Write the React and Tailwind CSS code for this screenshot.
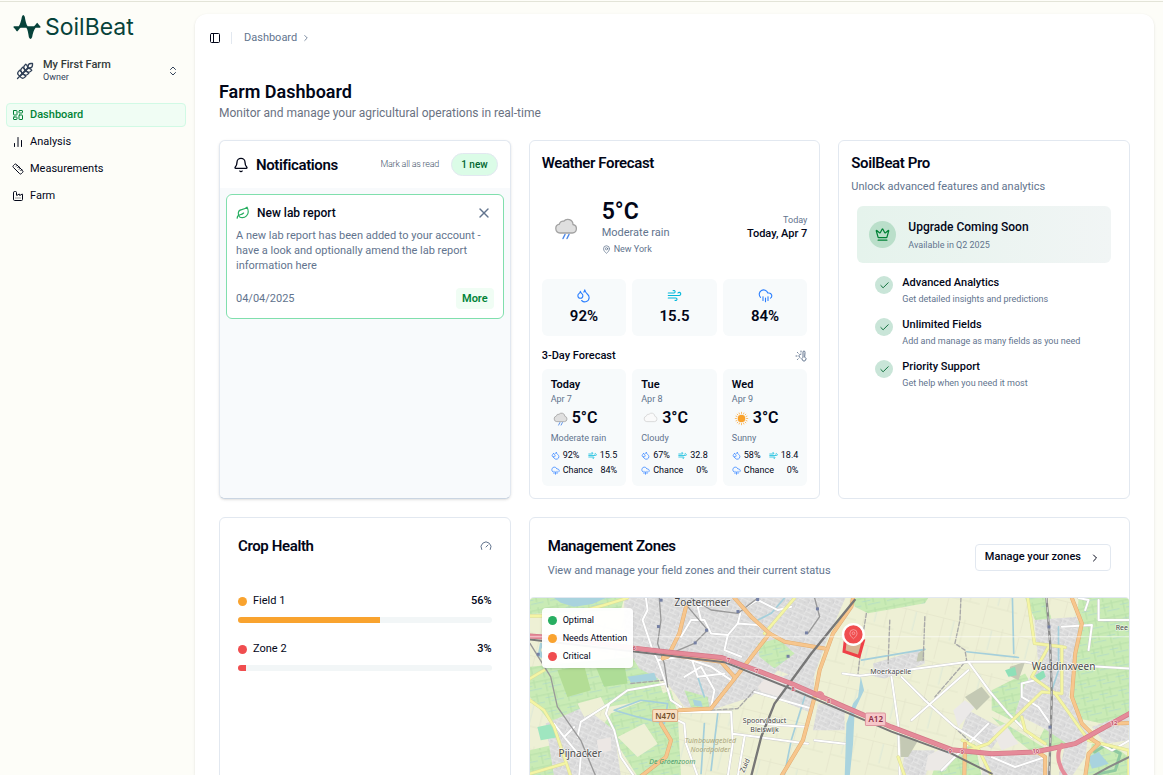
import React from 'react';
import clsx from 'clsx';
import {
  Bell,
  ChartNoAxesColumn,
  Check,
  ChevronRight,
  ChevronsUpDown,
  CloudRain,
  Crown,
  Droplets,
  Factory,
  Gauge,
  LayoutDashboard,
  Leaf,
  MapPin,
  PanelLeft,
  Ruler,
  ThermometerSun,
  Wheat,
  Wind,
  X,
} from 'lucide-react';

const NAV = [
  { label: 'Dashboard', icon: LayoutDashboard, active: true },
  { label: 'Analysis', icon: ChartNoAxesColumn },
  { label: 'Measurements', icon: Ruler },
  { label: 'Farm', icon: Factory },
];

const STATS = [
  { label: 'Humidity', icon: Droplets, value: '92%', color: 'text-blue-500' },
  { label: 'Wind', icon: Wind, value: '15.5', color: 'text-cyan-500' },
  { label: 'Chance of rain', icon: CloudRain, value: '84%', color: 'text-blue-500' },
];

const FORECAST = [
  { day: 'Today', date: 'Apr 7', sky: 'rain', temp: '5°C', text: 'Moderate rain', humidity: '92%', wind: '15.5', chance: '84%' },
  { day: 'Tue', date: 'Apr 8', sky: 'cloud', temp: '3°C', text: 'Cloudy', humidity: '67%', wind: '32.8', chance: '0%' },
  { day: 'Wed', date: 'Apr 9', sky: 'sun', temp: '3°C', text: 'Sunny', humidity: '58%', wind: '18.4', chance: '0%' },
];

const PERKS = [
  { title: 'Advanced Analytics', text: 'Get detailed insights and predictions' },
  { title: 'Unlimited Fields', text: 'Add and manage as many fields as you need' },
  { title: 'Priority Support', text: 'Get help when you need it most' },
];

const HEALTH = [
  { name: 'Field 1', value: 56, color: 'bg-[#f9a32f]' },
  { name: 'Zone 2', value: 3, color: 'bg-[#f04d4f]' },
];

const LEGEND = [
  { label: 'Optimal', color: 'bg-[#27ae60]' },
  { label: 'Needs Attention', color: 'bg-[#f9a32f]' },
  { label: 'Critical', color: 'bg-[#f04d4f]' },
];

/* ── Shared bits ── */
const Card = ({ className = '', children }) => (
  <section className={clsx('rounded-md border border-slate-200 bg-white', className)}>{children}</section>
);

const CardTitle = ({ children }) => (
  <h2 className="text-[15px] leading-5 font-semibold tracking-tight">{children}</h2>
);

const Logo = () => (
  <a href="#" className="flex items-center gap-1 px-[13px] text-[#06423a]">
    <svg viewBox="36 40 88 78" className="h-[26px] w-7" fill="currentColor" aria-hidden="true">
      <path d="M38 77L54 77C58 72 62 58 64 47Q68 36 73 47C75 60 78 72 82 77L102 77C106 74 109 69 112 66C115 69 118 75 122 77L122 81L107 81C102 86 98 100 96 111Q91 122 86 111C84 98 82 86 78 81L60 81C56 84 52 90 49 93C45 90 43 83 38 81Z" />
    </svg>
    <span className="font-[Inter] text-[23px] leading-7">SoilBeat</span>
  </a>
);

/* ── Weather glyphs ── */
const SkyIcon = ({ sky, className }) => {
  if (sky === 'sun') {
    return (
      <svg viewBox="0 0 24 24" className={className} aria-hidden="true">
        <circle cx="12" cy="12" r="6" fill="#f8a12b" />
        <g stroke="#f9bd6b" strokeWidth="1.6" strokeLinecap="round">
          <path d="M12 2v2M12 20v2M2 12h2M20 12h2M5 5l1.4 1.4M17.6 17.6 19 19M5 19l1.4-1.4M17.6 6.400 19 5" />
          <path d="M8.200 3.200l.6 1.600M15.200 19.200l.6 1.600M3.200 15.800l1.600-.6M19.200 8.800l1.600-.6M15.800 3.200l-.6 1.600M8.800 19.200l-.6 1.600M3.200 8.200l1.600.6M19.200 15.200l1.600.6" />
        </g>
      </svg>
    );
  }
  const cloudy = sky === 'cloud';
  return (
    <svg viewBox="0 0 24 24" className={className} aria-hidden="true">
      <path
        d="M6 17a4.500 4.500 0 0 1-.6-8.900 3.600 3.600 0 0 1 4.300-2.900 5.300 5.300 0 0 1 9.300 3.300 4.300 4.300 0 0 1-.7 8.500Z"
        fill={cloudy ? '#fafafa' : '#dfdfdf'}
        stroke={cloudy ? '#d4d4d4' : '#a3a3a3'}
        strokeWidth="1.300"
      />
      {!cloudy && <path d="m11 18.500-2 4M15 18.500l-2 4" stroke="#4a86e8" strokeWidth="1.400" strokeLinecap="round" />}
    </svg>
  );
};

/* ── Sidebar ── */
const Sidebar = () => (
  <aside className="flex w-[194px] shrink-0 flex-col pt-[11px]">
    <Logo />
    <button type="button" className="mt-[17px] flex items-center pr-[15px] pl-4 text-left">
      <Wheat className="size-[18px] text-slate-700" strokeWidth={1.75} />
      <span className="ml-[9px] flex-1">
        <span className="block text-[11px] leading-[14px] font-medium text-[#333b3b]">My First Farm</span>
        <span className="block text-[9px] leading-[11px] text-slate-700">Owner</span>
      </span>
      <ChevronsUpDown className="size-3 text-slate-700" />
    </button>
    <nav className="mt-5 flex flex-col gap-[3px] pr-2 pl-[6px]">
      {NAV.map(({ label, icon: Icon, active }) => (
        <a
          key={label}
          href="#"
          aria-current={active ? 'page' : undefined}
          className={clsx(
            'flex h-6 items-center gap-[6px] rounded border px-[5px] text-[11px] leading-[18px]',
            active ? 'border-[#d1fae5] bg-green-50 font-medium text-green-700' : 'border-transparent text-slate-950'
          )}
        >
          <Icon className="size-3" />
          {label}
        </a>
      ))}
    </nav>
  </aside>
);

/* ── Notifications ── */
const Notifications = () => (
  <Card className="flex flex-col overflow-hidden border-b-slate-300 shadow-sm">
    <header className="flex h-[47px] items-center pr-3 pl-[13px]">
      <Bell className="size-4" />
      <h2 className="ml-[7px] flex-1 text-[15px] leading-5 font-semibold tracking-tight">Notifications</h2>
      <button type="button" className="text-[9px] font-light tracking-tight text-slate-600">Mark all as read</button>
      <span className="ml-3 rounded-full border border-slate-200 bg-green-100 px-[9px] text-[10px] leading-[21px] font-medium text-green-800">
        1 new
      </span>
    </header>
    <div className="flex-1 bg-slate-50 p-[6px]">
      <article className="rounded-md border border-[#80dfad] bg-white p-[9px]">
        <div className="flex items-center">
          <Leaf className="size-[14px] text-[#27ae60]" />
          <h3 className="ml-[7px] flex-1 text-xs leading-[18px] font-medium">New lab report</h3>
          <button type="button" aria-label="Dismiss" className="mr-[2px]">
            <X className="size-4 text-slate-500" />
          </button>
        </div>
        <p className="mt-[6px] text-[11px] leading-[15px] text-slate-500">
          A new lab report has been added to your account - have a look and optionally amend the lab report information here
        </p>
        <div className="mt-[15px] flex items-center justify-between">
          <time className="text-[11px] leading-[18px] text-slate-500">04/04/2025</time>
          <button type="button" className="rounded bg-green-50 px-[6px] text-[11px] leading-[21px] font-semibold text-green-700">
            More
          </button>
        </div>
      </article>
    </div>
  </Card>
);

/* ── Weather ── */
const ForecastTile = ({ item }) => (
  <div className="flex flex-1 flex-col rounded-md bg-[#f7fafb] px-[9px] py-2">
    <h4 className="text-[11px] leading-4 font-semibold">{item.day}</h4>
    <p className="text-[9px] leading-3 text-slate-500">{item.date}</p>
    <div className="mt-1 flex items-center gap-1">
      <SkyIcon sky={item.sky} className="ml-[2px] size-[15px]" />
      <span className="text-[16px] leading-[18px] font-semibold">{item.temp}</span>
    </div>
    <p className="mt-1 text-[9px] leading-[14px] text-slate-500">{item.text}</p>
    <div className="mt-[3px] flex items-center justify-between text-[9px] leading-[15px]">
      <span className="flex items-center gap-[3px]">
        <Droplets className="size-[9px] text-blue-500" />
        {item.humidity}
      </span>
      <span className="flex items-center gap-[3px]">
        <Wind className="size-[9px] text-cyan-500" />
        {item.wind}
      </span>
    </div>
    <div className="flex items-center justify-between text-[9px] leading-[15px]">
      <span className="flex items-center gap-[3px]">
        <CloudRain className="size-[9px] text-blue-500" />
        Chance
      </span>
      {item.chance}
    </div>
  </div>
);

const Weather = () => (
  <Card className="p-3">
    <CardTitle>Weather Forecast</CardTitle>
    <div className="mt-[27px] flex items-center">
      <SkyIcon sky="rain" className="mx-3 size-6" />
      <div className="ml-3 flex-1">
        <p className="text-[23px] leading-6 font-semibold">5°C</p>
        <p className="text-[11px] leading-[18px] text-slate-500">Moderate rain</p>
        <p className="flex items-center gap-[3px] text-[9px] leading-[14px] text-slate-500">
          <MapPin className="size-[9px]" />
          New York
        </p>
      </div>
      <div className="text-right">
        <p className="text-[9px] leading-3 text-slate-500">Today</p>
        <p className="text-[11px] leading-4 font-medium">Today, Apr 7</p>
      </div>
    </div>
    <div className="mt-[23px] flex gap-[6px]">
      {STATS.map(({ label, icon: Icon, value, color }) => (
        <div key={label} className="flex h-[57px] flex-1 flex-col items-center rounded-md bg-[#f7fafb] pt-[9px]">
          <Icon className={clsx('size-[15px]', color)} strokeWidth={1.75} aria-label={label} />
          <span className="mt-1 text-[15px] leading-[18px] font-semibold">{value}</span>
        </div>
      ))}
    </div>
    <div className="mt-3 flex h-4 items-center justify-between">
      <h3 className="text-[11px] font-medium">3-Day Forecast</h3>
      <ThermometerSun className="size-3 text-slate-500" />
    </div>
    <div className="mt-[5px] flex gap-[6px]">
      {FORECAST.map(item => (
        <ForecastTile key={item.day} item={item} />
      ))}
    </div>
  </Card>
);

/* ── Pro upsell ── */
const ProCard = () => (
  <Card className="p-3">
    <CardTitle>SoilBeat Pro</CardTitle>
    <p className="mt-[5px] text-[11px] leading-[18px] text-slate-500">Unlock advanced features and analytics</p>
    <div className="mx-[6px] mt-[10px] flex h-[57px] items-center gap-3 rounded-md bg-linear-to-r from-[#e5f3ec] to-[#f1f5f5] px-3">
      <span className="flex size-[27px] items-center justify-center rounded-full bg-[#badfca]">
        <Crown className="size-[15px] text-green-700" />
      </span>
      <div className="pt-[2px]">
        <h3 className="text-xs leading-[18px] font-medium">Upgrade Coming Soon</h3>
        <p className="text-[9px] leading-[18px] text-slate-500">Available in Q2 2025</p>
      </div>
    </div>
    <ul className="mt-[11px] flex flex-col gap-[9px] px-6">
      {PERKS.map(perk => (
        <li key={perk.title} className="flex gap-[9px]">
          <span className="mt-[2px] flex size-[18px] items-center justify-center rounded-full bg-[#c9e5d8]">
            <Check className="size-[11px] text-green-800" />
          </span>
          <div>
            <h4 className="text-[11px] leading-[17px] font-medium">{perk.title}</h4>
            <p className="text-[9px] leading-4 text-slate-500">{perk.text}</p>
          </div>
        </li>
      ))}
    </ul>
  </Card>
);

/* ── Crop health ── */
const CropHealth = () => (
  <Card className="p-[18px]">
    <div className="flex items-center justify-between">
      <CardTitle>Crop Health</CardTitle>
      <Gauge className="size-3 text-slate-500" />
    </div>
    <div className="mt-9 flex flex-col gap-[17px]">
      {HEALTH.map(row => (
        <div key={row.name}>
          <div className="flex items-center text-[11px] leading-[18px]">
            <span className={clsx('size-[9px] rounded-full', row.color)} />
            <span className="ml-[6px] flex-1">{row.name}</span>
            <span className="font-medium">{row.value}%</span>
          </div>
          <div
            role="progressbar"
            aria-label={row.name}
            aria-valuenow={row.value}
            className="mt-[7px] h-[6px] overflow-hidden rounded-full bg-[#f2f6f7]"
          >
            <div className={clsx('h-full', row.color)} style={{ width: `${row.value}%` }} />
          </div>
        </div>
      ))}
    </div>
  </Card>
);

/* ── Map: terrain, roads and labels ── */
const URBAN = [
  'M300 264H962L905 395 860 520 760 480 680 560 560 600 480 590 430 520 345 475 300 400Z',
  'M690 540 860 520 860 590 700 550Z',
  'M770 500 870 470 865 610 790 580Z',
  'M880 580 960 590 960 660 865 660Z',
  'M65 640 180 590 270 660 290 798H90Z',
  'M1045 460 1195 415 1200 460 1080 505 1050 500Z',
  'M1528 330 1660 320 1660 400 1630 560 1700 690 1640 710 1550 650 1470 610 1500 520 1540 470Z',
  'M1330 600 1440 660 1400 715 1310 660Z',
  'M1380 735 1550 735 1580 798H1370Z',
  'M1620 700 1690 670 1680 740 1640 798 1600 798Z',
  'M1700 650 1810 610 1810 690 1740 700Z',
  'M1140 720 1230 720 1200 798H1130Z',
];

const GREENS = [
  'M18 264H300L290 300 18 312Z',
  'M18 470 330 440 400 500 420 560 250 590 160 640 90 650 18 560Z',
  'M18 720 100 700 110 798H18Z',
  'M700 400 760 385 810 430 750 475 705 440Z',
  'M260 610 440 540 460 610 470 798H340L240 640Z',
  'M985 264H1210L1200 280 1030 310 990 290Z',
  'M1660 264H1812V620L1730 640 1640 620 1650 420Z',
  'M1500 264H1560L1580 330 1530 330Z',
  'M1400 540 1500 490 1540 560 1480 640 1400 600Z',
  'M1400 620 1440 640 1570 720 1520 725 1440 660Z',
  'M1560 650 1640 700 1590 720 1540 690Z',
  'M1700 700 1770 710 1810 740V798H1680Z',
  'M1240 740 1350 700 1370 798H1220Z',
];

const WATER = [
  'M90 264H245L205 282 150 290 110 278Z',
  'M48 398 60 400 50 420 62 445 40 440Z',
  'M310 500 390 488 398 510 320 518Z',
  'M505 568 530 572 535 590 510 586Z',
  'M1008 500 1018 540 990 600 985 700 975 798H960L965 640 985 580 1000 560Z',
  'M1688 740 1720 725 1750 760 1700 775Z',
];

const BLOCKS = [
  { d: 'M700 530 735 490 780 500 770 560 710 545Z', fill: '#ece7e4' },
  { d: 'M218 690 260 680 262 720 225 730Z', fill: '#ece7e4' },
  { d: 'M1285 600 1320 570 1350 590 1300 650Z', fill: '#ebe9e8' },
  { d: 'M1400 660 1440 640 1480 700 1430 720Z', fill: '#ece9e6' },
  { d: 'M1210 735 1260 710 1300 730 1260 780 1200 780Z', fill: '#ece9e6' },
  { d: 'M1180 430 1198 415 1198 450 1175 455Z', fill: '#c4c9b4' },
  { d: 'M1455 470 1500 455 1480 510 1450 495Z', fill: '#c4c9b4' },
  { d: 'M1320 560 1370 530 1395 560 1355 600Z', fill: '#c4c9b4' },
  { d: 'M1125 670 1180 690 1150 740 1128 740Z', fill: '#c4c9b4' },
  { d: 'M1440 480 1470 470 1475 495 1450 500Z', fill: '#8fe0b8' },
  { d: 'M1530 495 1555 480 1562 500 1540 515Z', fill: '#8fe0b8' },
  { d: 'M40 650 90 640 105 680 50 690Z', fill: '#9fe6c0' },
  { d: 'M100 480 180 465 200 540 130 560Z', fill: '#b3dd95' },
  { d: 'M215 470 300 458 310 520 240 530Z', fill: '#aedd97' },
  { d: 'M160 580 230 560 245 590 180 620Z', fill: '#eef0d5' },
  { d: 'M280 680 360 640 400 700 340 740Z', fill: '#eef0d5' },
];

const WHITE_ROADS = [
  'M365 264 370 300 355 330 365 360 385 420 400 450 425 520 440 570',
  'M400 450 470 440 560 470 620 510 600 550',
  'M470 380 500 330 540 330 560 370 610 375 640 340 700 345 735 370',
  'M530 330 520 290 560 280M610 375 600 420 650 440M640 340 650 300 700 270 760 300 800 290',
  'M425 520 310 540 255 580 170 635 160 680M255 580 245 610 270 660 290 740 330 798',
  'M440 570 470 590M440 620 480 640 485 700 520 798',
  'M465 605 620 605 625 700 610 798M690 545 860 595M625 670 850 700M660 680 640 798',
  'M480 500 530 470 570 540 560 590M500 440 520 500 600 490',
  'M90 640 120 680 150 650M120 680 170 740 165 798',
  'M954 490 1005 497 1140 480 1330 455 1500 455 1560 465 1650 465 1812 475',
  'M1100 500 1120 640 1125 798M1130 500 1200 570 1290 650 1370 700',
  'M1330 455 1395 545 1450 610 1520 680M1330 480 1160 630M1250 780 1390 640',
  'M1660 264 1690 270 1680 300M1720 270 1720 330 1812 330M1610 350 1700 345 1690 420',
  'M1530 510 1490 520 1490 560 1540 590 1575 640 1575 690M1400 740 1470 770 1560 740',
  'M700 640 850 650M870 690 960 700M1690 680 1760 720 1812 690',
];

const YELLOW_ROADS = [
  'M18 318 120 318 240 285 310 264',
  'M18 505 60 480M18 570 60 600 90 650 140 798M18 790 120 760',
  'M810 264 720 370',
  'M1508 264 1528 400 1610 410 1620 412M1570 410 1520 500 1590 550 1690 690 1730 650',
  'M1610 410 1610 550 1550 545 1390 700 1330 720M1490 620 1500 660 1560 700',
  'M1690 690 1810 720V798M1312 690 1360 715 1400 798M1120 740 1140 798',
];

const ORANGE_ROADS = [
  'M485 290 465 370 430 440 415 445 425 430 480 440 590 455 630 500',
  'M630 264 680 320 735 370 780 395 900 415',
  'M735 370 650 480 560 595 465 600',
  'M410 640 440 690 425 740 350 798',
  'M985 264 980 290 925 370 885 480 870 560 835 690 770 798',
  'M1640 264 1670 340 1650 430 1640 560 1670 640 1700 670 1760 640 1812 638',
  'M1320 700 1318 798M1530 720 1560 740 1560 798M1690 680 1720 700 1690 730 1680 798',
];

const RAIL = [
  'M405 264 410 330 400 400 420 460 430 530',
  'M18 400 80 500 100 590 170 690 215 798',
  'M490 290 550 360 510 400 440 430',
  'M700 264 640 310 560 300 500 264M870 264 885 320 850 370',
];

const MOTORWAY = 'M18 378 120 385 330 414 450 428 590 442 690 478 800 520 960 590 1100 650 1280 718 1400 730 1530 725 1650 700 1812 610';

const SHIELDS = [
  [330, 414, '6'], [612, 450, '7'], [697, 484, '7'], [806, 536, '8'], [912, 571, '8'],
  [1276, 722, '9'], [1312, 726, '9'], [1532, 722, '10'], [1766, 638, '12'],
];

const NODES = [
  [410, 270], [402, 349], [42, 432], [546, 360], [512, 398], [640, 304], [699, 268], [878, 296], [845, 368], [790, 438], [1571, 350], [1574, 650],
];

const FieldMap = () => (
  <svg viewBox="18 264 1794 900" preserveAspectRatio="xMinYMin slice" className="block h-[300px] w-full" role="img" aria-label="Field map">
    <defs>
      <pattern id="streets" width="34" height="28" patternUnits="userSpaceOnUse" patternTransform="rotate(24)">
        <rect width="34" height="28" fill="#dadada" />
        <path d="M0 5H34M9 5V28M23 0V18M9 18H34" stroke="#e8e8e8" strokeWidth="2.500" />
        <path d="M2 12h5v9M14 10h7M28 23h5" stroke="#cbcbcd" strokeWidth="2" fill="none" />
      </pattern>
      <pattern id="fields" width="116" height="136" patternUnits="userSpaceOnUse" patternTransform="rotate(14)">
        <rect width="116" height="136" fill="#eef0d5" />
        <path d="M0 10H116M22 10V136M86 0V80M22 80H116" stroke="#e3e6cc" strokeWidth="2.500" />
        <path d="M54 12V72" stroke="#d3e2d8" strokeWidth="2" />
      </pattern>
      <pattern id="meadow" width="58" height="42" patternUnits="userSpaceOnUse" patternTransform="rotate(-12)">
        <rect width="58" height="42" fill="#c9ebb5" />
        <path d="M0 8H58M14 8V42M38 0V26" stroke="#bbe2ac" strokeWidth="4" />
        <path d="M20 30H58M4 18H30" stroke="#aed9cb" strokeWidth="2" />
      </pattern>
    </defs>
    <rect x="18" y="264" width="1794" height="900" fill="url(#fields)" />
    {GREENS.map(d => <path key={d} d={d} fill="url(#meadow)" />)}
    {URBAN.map(d => <path key={d} d={d} fill="url(#streets)" />)}
    {BLOCKS.map(b => <path key={b.d} d={b.d} fill={b.fill} />)}
    <path d="M700 400 760 385 810 430 750 475 705 440ZM480 540 550 560 555 595 500 590Z" fill="url(#meadow)" />
    {WATER.map(d => <path key={d} d={d} fill="#a9d3de" />)}
    <g fill="none" strokeLinejoin="round" strokeLinecap="round">
      <path
        d="M1010 450 1200 418M1325 425 1480 442M1462 264 1466 430M270 600 350 570 430 580 420 640 340 620ZM780 264 740 310 700 330M520 500 540 560M840 560 800 690 780 790M1600 350 1600 480 1580 540M540 640 530 790M580 610 560 780"
        stroke="#a4cfdb"
        strokeWidth="5"
      />
      <path d="M1708 725 1740 705 1785 730 1770 780 1720 790" stroke="#8fc9a0" strokeWidth="9" />
      <path d="M1308 264 1305 330 1290 400 1320 420 1325 450 1230 560M1200 320 1195 450M1095 330 1090 460M1025 310 1010 400 1000 490M1130 500 1330 690M560 600 640 595 690 540M320 520 420 510" stroke="#a8a8a8" strokeWidth="4" strokeDasharray="12 6" />
      {WHITE_ROADS.map(d => <path key={d} d={d} stroke="#c9c9c9" strokeWidth="8" />)}
      {WHITE_ROADS.map(d => <path key={d} d={d} stroke="#fff" strokeWidth="6" />)}
      {YELLOW_ROADS.map(d => <path key={d} d={d} stroke="#dcdd9a" strokeWidth="10" />)}
      {YELLOW_ROADS.map(d => <path key={d} d={d} stroke="#f4f5a4" strokeWidth="7" />)}
      {RAIL.map(d => <path key={d} d={d} stroke="#999" strokeWidth="4" />)}
      {ORANGE_ROADS.map(d => <path key={d} d={d} stroke="#e0ad72" strokeWidth="12" />)}
      {ORANGE_ROADS.map(d => <path key={d} d={d} stroke="#f7c68d" strokeWidth="9" />)}
      <path d="M680 798 710 680 750 580 860 430 990 270" stroke="#777" strokeWidth="7" />
      <path d="M1564 264 1575 400 1580 560 1572 798" stroke="#8a8a8a" strokeWidth="7" />
      <path d="M1564 264 1575 400 1580 560 1572 798" stroke="#ccc" strokeWidth="3" strokeDasharray="14 14" />
      <path d="M18 388 330 424 600 456 800 536 1100 664 1280 730 1400 790" stroke="#777" strokeWidth="6" />
      <path d="M1700 798 1750 770 1812 740" stroke="#888" strokeWidth="6" />
      <path d={MOTORWAY} stroke="#d47888" strokeWidth="15" />
      <path d={MOTORWAY} stroke="#e58b99" strokeWidth="11" />
      <path d="M1610 704C1590 730 1600 770 1625 800" stroke="#e58b99" strokeWidth="12" />
      <path d="M870 555C885 535 905 555 890 565" stroke="#e58b99" strokeWidth="8" />
      <path d="M18 380H1812" stroke="#fff" strokeOpacity=".6" strokeWidth="3" />
    </g>
    {NODES.map(([x, y]) => <rect key={`${x}-${y}`} x={x - 4} y={y - 4} width="9" height="9" fill="#7580a4" />)}
    <g fontFamily="'Noto Sans', sans-serif" textAnchor="middle">
      <g fontSize="18" fontWeight="700" fill="#c04e63" stroke="#f8e4e6" strokeWidth="3" paintOrder="stroke">
        {SHIELDS.map(([x, y, n]) => <text key={x} x={x} y={y + 6}>{n}</text>)}
      </g>
      <rect x="385" y="598" width="75" height="36" rx="4" fill="#f8dfc3" stroke="#dfae82" strokeWidth="3" />
      <rect x="1022" y="608" width="60" height="38" rx="4" fill="#f6c7c9" stroke="#dd969f" strokeWidth="3" />
      <g fontSize="24" fontWeight="600">
        <text x="423" y="625" fill="#76512b">N470</text>
        <text x="1053" y="636" fill="#8b2c43">A12</text>
      </g>
      <g fill="#4a4a4a" stroke="#fff" strokeOpacity=".65" strokeWidth="4" paintOrder="stroke">
        <text x="534" y="289" fontSize="30">Zoetermeer</text>
        <text x="168" y="739" fontSize="30">Pijnacker</text>
        <text x="1615" y="480" fontSize="30">Waddinxveen</text>
        <text x="1098" y="491" fontSize="21">Moerkapelle</text>
        <text x="720" y="638" fontSize="21">Spoorviaduct</text>
        <text x="720" y="665" fontSize="21">Bleiswijk</text>
        <text x="1808" y="361" fontSize="21" textAnchor="end">Ree</text>
        <text x="668" y="768" fontSize="21" transform="rotate(-65 668 768)">Zuid</text>
      </g>
      <g fontSize="21" fontStyle="italic">
        <text x="558" y="699" fill="#aaa67c">Tuinbouwgebied</text>
        <text x="558" y="726" fill="#aaa67c">Noordpolder</text>
        <text x="444" y="762" fill="#4d9c68">De Groenzoom</text>
      </g>
    </g>
    {/* selected zone with its marker */}
    <path d="M962 388 1016 392 1003 439 958 424Z" fill="#d8b795" stroke="#ef4048" strokeWidth="9" />
    <circle cx="986" cy="373" r="31" fill="#f04d4f" stroke="#fff" strokeWidth="7" />
    <g transform="translate(970 356) scale(1.350)" fill="none" stroke="#fbb6b6" strokeWidth="1.500">
      <path d="M20 10c0 5-5.500 10.200-7.400 11.800a1 1 0 0 1-1.200 0C9.500 20.200 4 15 4 10a8 8 0 0 1 16 0" />
      <circle cx="12" cy="10" r="3" />
    </g>
  </svg>
);

const ManagementZones = () => (
  <Card className="col-span-2 overflow-hidden">
    <header className="flex h-[79px] items-center justify-between px-[18px]">
      <div>
        <CardTitle>Management Zones</CardTitle>
        <p className="mt-[6px] text-[11px] leading-[18px] text-slate-500">View and manage your field zones and their current status</p>
      </div>
      <button type="button" className="flex h-[27px] items-center gap-2 rounded border border-slate-200 px-[9px] text-[11px] font-medium">
        Manage your zones
        <ChevronRight className="size-3" />
      </button>
    </header>
    <div className="relative overflow-hidden rounded-t border-t border-slate-200">
      <FieldMap />
      <ul className="absolute top-[10px] left-3 flex flex-col rounded bg-white/95 px-[6px] py-[3px] shadow-sm">
        {LEGEND.map(item => (
          <li key={item.label} className="flex items-center gap-[6px] text-[9px] leading-[18px]">
            <span className={clsx('size-[9px] rounded-full', item.color)} />
            {item.label}
          </li>
        ))}
      </ul>
    </div>
  </Card>
);

export default function App() {
  return (
    <div className="h-screen overflow-hidden bg-[#fdfdf8] pt-px font-[Roboto,sans-serif] text-slate-950">
      <div className="flex h-full border-t border-[#e3e4d8]">
        <Sidebar />
        <main className="mt-3 mr-[9px] ml-px flex-1 overflow-hidden rounded-t-xl bg-white shadow-sm">
          <header className="flex h-12 items-center px-[14px]">
            <button type="button" aria-label="Toggle sidebar">
              <PanelLeft className="size-3" />
            </button>
            <span className="ml-[10px] h-3 w-px bg-slate-200" />
            <nav aria-label="Breadcrumb" className="ml-3 flex items-center gap-1 text-[11px] leading-[18px] text-slate-500">
              <a href="#">Dashboard</a>
              <ChevronRight className="size-[10px]" />
            </nav>
          </header>
          <div className="px-6 pt-[18px]">
            <h1 className="text-[18px] leading-6 font-semibold">Farm Dashboard</h1>
            <p className="text-xs leading-[18px] text-gray-500">Monitor and manage your agricultural operations in real-time</p>
            <div className="mt-[18px] grid grid-cols-3 gap-[18px]">
              <Notifications />
              <Weather />
              <ProCard />
              <CropHealth />
              <ManagementZones />
            </div>
          </div>
        </main>
      </div>
    </div>
  );
}
